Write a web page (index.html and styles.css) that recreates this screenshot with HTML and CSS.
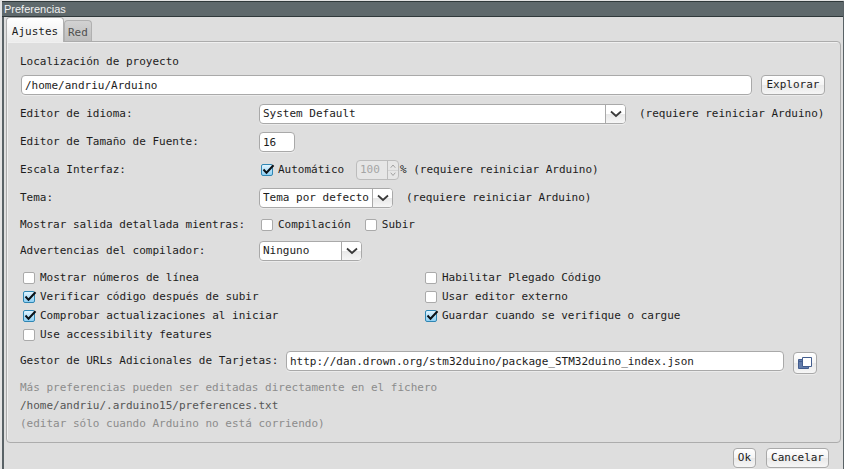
FILE: index.html
```html
<!DOCTYPE html>
<html lang="es">
<head>
<meta charset="utf-8">
<title>Preferencias</title>
<link rel="stylesheet" href="styles.css">
</head>
<body>
<svg class="defs" aria-hidden="true">
  <symbol id="tick" viewBox="0 0 14 13"><path d="M2.500 5.500 L5.500 8.800 L12.500 1.200" fill="none" stroke="#0c1116" stroke-width="2"/></symbol>
  <symbol id="chevron" viewBox="0 0 12 8"><path d="M1 1.500 L6 6 L11 1.500" fill="none" stroke="#3a3a3a" stroke-width="1.8"/></symbol>
</svg>
<div class="window">
  <header class="titlebar">Preferencias</header>
  <main class="body">
    <nav class="tabs">
      <button type="button" class="tab tab-active">Ajustes</button>
      <button type="button" class="tab">Red</button>
    </nav>
    <form class="panel">
      <div class="row row-title"><label for="path">Localización de proyecto</label></div>
      <div class="row path-row">
        <input class="field grow" id="path" type="text" value="/home/andriu/Arduino">
        <button type="button" class="btn">Explorar</button>
      </div>
      <div class="settings">
        <div class="row">
          <label class="name" for="lang">Editor de idioma:</label>
          <span class="combo grow"><select id="lang" class="field"><option>System Default</option></select><span class="drop"><svg><use href="#chevron"/></svg></span></span>
          <span class="note">(requiere reiniciar Arduino)</span>
        </div>
        <div class="row">
          <label class="name" for="size">Editor de Tamaño de Fuente:</label>
          <input class="field size" id="size" type="text" value="16">
        </div>
        <div class="row">
          <label class="name" for="scale">Escala Interfaz:</label>
          <label class="check auto"><span class="box"><input type="checkbox" checked><svg><use href="#tick"/></svg></span>Automático</label>
          <span class="spinner"><input id="scale" type="text" value="100" disabled><span class="arrows"><svg viewBox="0 0 11 18"><path d="M0 9.500H11" stroke="#d2d2d2"/><path d="M3 6.500 L5.500 3.500 L8 6.500 M3 12 L5.500 15 L8 12" fill="none" stroke="#999"/></svg></span></span>
          <span>% (requiere reiniciar Arduino)</span>
        </div>
        <div class="row">
          <label class="name" for="theme">Tema:</label>
          <span class="combo combo-theme"><select id="theme" class="field"><option>Tema por defecto</option></select><span class="drop"><svg><use href="#chevron"/></svg></span></span>
          <span class="note">(requiere reiniciar Arduino)</span>
        </div>
        <div class="row row-short">
          <span class="name">Mostrar salida detallada mientras:</span>
          <label class="check"><span class="box"><input type="checkbox"><svg><use href="#tick"/></svg></span>Compilación</label>
          <label class="check next"><span class="box"><input type="checkbox"><svg><use href="#tick"/></svg></span>Subir</label>
        </div>
        <div class="row">
          <label class="name" for="warn">Advertencias del compilador:</label>
          <span class="combo combo-warn"><select id="warn" class="field"><option>Ninguno</option></select><span class="drop"><svg><use href="#chevron"/></svg></span></span>
        </div>
      </div>
      <div class="options">
        <div>
          <label class="check"><span class="box"><input type="checkbox"><svg><use href="#tick"/></svg></span>Mostrar números de línea</label>
          <label class="check"><span class="box"><input type="checkbox" checked><svg><use href="#tick"/></svg></span>Verificar código después de subir</label>
          <label class="check"><span class="box"><input type="checkbox" checked><svg><use href="#tick"/></svg></span>Comprobar actualizaciones al iniciar</label>
          <label class="check"><span class="box"><input type="checkbox"><svg><use href="#tick"/></svg></span>Use accessibility features</label>
        </div>
        <div>
          <label class="check"><span class="box"><input type="checkbox"><svg><use href="#tick"/></svg></span>Habilitar Plegado Código</label>
          <label class="check"><span class="box"><input type="checkbox"><svg><use href="#tick"/></svg></span>Usar editor externo</label>
          <label class="check"><span class="box"><input type="checkbox" checked><svg><use href="#tick"/></svg></span>Guardar cuando se verifique o cargue</label>
        </div>
      </div>
      <div class="url-row">
        <label class="url-name" for="urls">Gestor de URLs Adicionales de Tarjetas:</label>
        <input class="field grow url" id="urls" type="text" value="http://dan.drown.org/stm32duino/package_STM32duino_index.json">
        <button type="button" class="btn btn-icon" aria-label="Abrir"><svg viewBox="0 0 14 12"><path d="M.5 2.500H10.500V11.500H.5Z" fill="#627cab" stroke="#435d8e"/><path d="M0 4.500H4" stroke="#435d8e"/><path d="M4.500 .500H13.500V9.500H4.500Z" fill="#fff" stroke="#435d8e"/></svg></button>
      </div>
      <div class="hints">
        <p>Más preferencias pueden ser editadas directamente en el fichero</p>
        <p class="file">/home/andriu/.arduino15/preferences.txt</p>
        <p>(editar sólo cuando Arduino no está corriendo)</p>
      </div>
    </form>
    <footer class="actions">
      <button type="button" class="btn">Ok</button>
      <button type="button" class="btn">Cancelar</button>
    </footer>
  </main>
</div>
</body>
</html>
```
FILE: styles.css
```css
* { box-sizing: border-box; }
body {
  margin: 0;
  background: #e4e4e4;
  color: #1c1c1c;
  font: 11px/18px "DejaVu Sans Mono", monospace;
}
button, input, select { font: inherit; color: inherit; margin: 0; }
.defs { position: absolute; width: 0; height: 0; }
.window {
  min-height: calc(100vh - 1px);
  margin: 1px 0 0 2px;
  border-left: 2px solid #596266;
  border-right: 1px solid #596266;
  background: #dedede;
}
.titlebar {
  height: 16px;
  margin-left: -2px;
  padding-left: 2px;
  border: 1px solid #30393b;
  border-width: 1px 0;
  background: #5f696c;
  color: #f1f1f1;
  font: 11px/14px "Liberation Sans", sans-serif;
}
.body { padding: 0 2px; }
.tabs { display: flex; align-items: flex-end; height: 24px; }
.tab {
  height: 21px;
  padding: 3px 3px 0;
  border: 1px solid #b0b0b0;
  border-bottom: 0;
  border-radius: 4px 4px 0 0;
  background: linear-gradient(#d2d2d2, #bebebe);
  color: #505050;
}
.tab-active {
  position: relative;
  height: 25px;
  min-width: 58px;
  margin-bottom: -1px;
  background: linear-gradient(#fff, #ececec);
  color: #1c1c1c;
}
.panel {
  padding: 9px 13px 9px;
  border: 1px solid #acacac;
  border-radius: 0 4px 4px 4px;
  box-shadow: inset 1px 1px #f0f0f0;
}
.row { display: flex; align-items: center; height: 28px; white-space: nowrap; }
.row-title { height: 22px; }
.row-short { height: 25px; }
.path-row { height: 20px; margin-top: 2px; padding: 0 2px 0 1px; gap: 9px; }
.settings { margin-top: 5px; }
.grow { flex: 1; min-width: 0; }
.name { width: 239px; flex: none; }
.note { min-width: 188px; margin-left: 13px; }
.field {
  height: 20px;
  padding: 0 3px;
  border: 1px solid #a9a9a9;
  border-radius: 4px;
  background: #fff;
  box-shadow: 0 1px #ebebeb;
  outline: 0;
}
.size { width: 36px; }
.combo { position: relative; display: flex; }
.combo select { width: 100%; appearance: none; }
.combo-theme { width: 134px; }
.combo-warn { width: 103px; }
.drop {
  position: absolute;
  top: 1px;
  right: 1px;
  width: 20px;
  height: 18px;
  display: grid;
  place-items: center;
  border-left: 1px solid #a9a9a9;
  border-radius: 0 3px 3px 0;
  background: linear-gradient(#fff 50%, #e8e8e8 50%, #f6f6f6);
  pointer-events: none;
}
.drop svg { width: 12px; height: 8px; }
.btn {
  height: 20px;
  padding: 0 4px;
  border: 1px solid #a9a9a9;
  border-radius: 4px;
  background: linear-gradient(#fff, #f4f4f4 50%, #e8e8e8 50%, #f6f6f6);
  box-shadow: 0 1px #ebebeb;
}
.path-row .btn { width: 64px; }
.check { display: flex; align-items: center; gap: 5px; height: 19px; white-space: nowrap; }
.settings .check { padding-left: 2px; }
.box { position: relative; display: flex; }
.box input {
  appearance: none;
  width: 12px;
  height: 12px;
  border: 1px solid #aaa;
  border-radius: 2px;
  background: #fff;
}
.box input:checked { border-color: #2f86b3; background: linear-gradient(#e0f4ff, #8fd0f4); }
.box svg { position: absolute; top: 0; left: 0; width: 14px; height: 13px; display: none; pointer-events: none; }
.box input:checked + svg { display: block; }
.auto { width: 97px; }
.next { margin-left: 12px; }
.spinner {
  display: flex;
  width: 43px;
  height: 20px;
  margin-right: 1px;
  border: 1px solid #bcbcbc;
  border-radius: 4px;
  background: #e6e6e6;
}
.spinner input { width: 30px; height: 18px; padding: 0 0 0 3px; border: 0; background: none; color: #a5a5a5; }
.arrows { width: 11px; border-left: 1px solid #bcbcbc; }
.arrows svg { display: block; width: 10px; height: 18px; }
.options { display: grid; grid-template-columns: 1fr 1fr; margin-top: 3px; padding-left: 3px; }
.url-row { display: flex; align-items: flex-start; margin-top: 7px; padding-right: 10px; white-space: nowrap; }
.url-name { min-width: 266px; line-height: 20px; }
.url { margin-right: 9px; }
.btn-icon { width: 24px; height: 22px; padding: 0; margin-top: 1px; display: grid; place-items: center; }
.btn-icon svg { width: 14px; height: 12px; }
.hints { margin-top: 5px; color: #8c8c8c; }
.hints p { margin: 0; }
.hints .file { color: #555; }
.actions { display: flex; justify-content: flex-end; gap: 10px; padding: 5px 12px 0 0; }
```
